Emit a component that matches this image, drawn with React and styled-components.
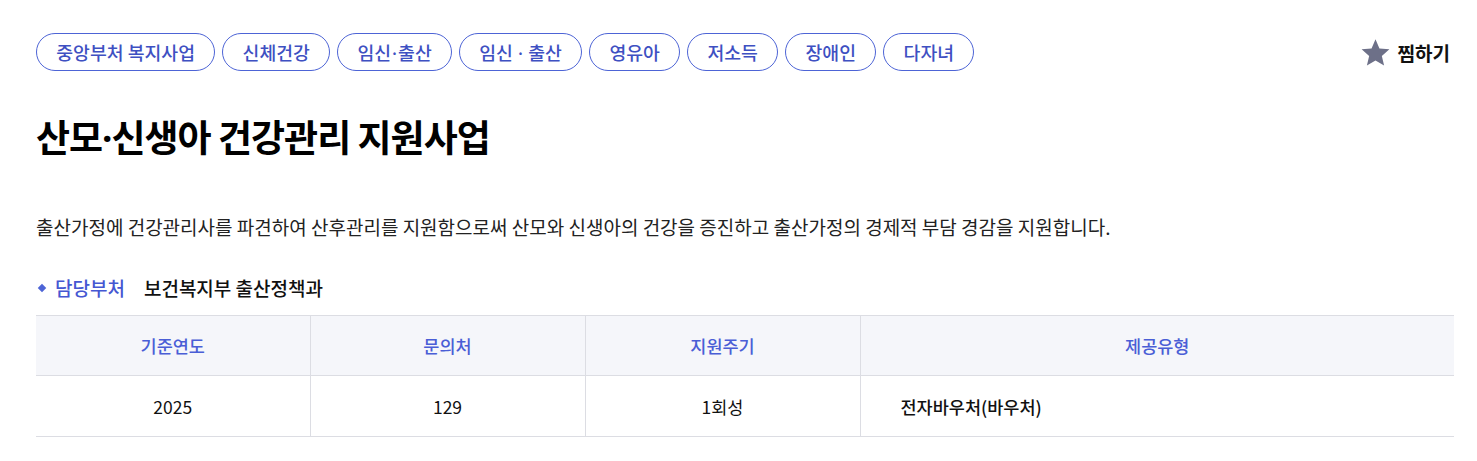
import React from "react";
import styled, { createGlobalStyle } from "styled-components";

const Global = createGlobalStyle`
  html, body { margin: 0; padding: 0; background: #fff; }
  body { font-family: "Noto Sans CJK KR", "Noto Sans", sans-serif; color: #111; }
`;

const Page = styled.div`
  padding: 33px 27px 0 36px;
`;

const TopRow = styled.div`
  display: flex;
  justify-content: space-between;
  align-items: center;
`;

const Chips = styled.div`
  display: flex;
  gap: 7px;
`;

const Chip = styled.span`
  display: inline-block;
  height: 38px;
  line-height: 36px;
  box-sizing: border-box;
  padding: 0 19.3px;
  border: 1px solid #4d64d6;
  border-radius: 19px;
  color: #3e50c2;
  font-size: 18.3px;
  font-weight: 500;
  white-space: pre;
`;

const Dot = styled.span`
  font-family: "Noto Sans", sans-serif;
  margin: 0 ${(p) => (p.$pad ? "1px" : "0")};
`;

const Fav = styled.button`
  display: flex;
  align-items: center;
  gap: 7px;
  border: 0;
  background: none;
  padding: 0;
  font-family: inherit;
  font-size: 19px;
  font-weight: 700;
  color: #111;
  cursor: pointer;
`;

const Title = styled.h1`
  margin: 37px 0 0;
  font-size: 37px;
  font-weight: 700;
  letter-spacing: -1px;
  line-height: 56px;
  color: #000;
`;

const Desc = styled.p`
  margin: 47px 0 0;
  font-size: 19px;
  line-height: 28px;
  color: #222;
`;

const Dept = styled.div`
  margin-top: 33px;
  display: flex;
  align-items: center;
  font-size: 19px;
  line-height: 28px;
`;

const Diamond = styled.span`
  width: 6px;
  height: 6px;
  background: #4d64d6;
  transform: rotate(45deg);
  margin: 0 10px 0 3px;
`;

const DeptLabel = styled.span`
  color: #4557d2;
  font-weight: 500;
  margin-right: 19px;
`;

const DeptValue = styled.span`
  color: #111;
  font-weight: 500;
`;

const Table = styled.table`
  margin-top: 13px;
  width: 1418px;
  border-collapse: collapse;
  table-layout: fixed;
  font-size: 17.5px;
  border-top: 1px solid #dcdde3;
  border-bottom: 1px solid #dcdde3;
`;

const Th = styled.th`
  height: 59px;
  padding: 0;
  background: #f5f6fa;
  color: #4a5ed6;
  font-weight: 500;
  text-align: center;
  border-left: 1px solid #dcdde3;
  border-bottom: 1px solid #dcdde3;
  &:first-child { border-left: 0; }
`;

const Td = styled.td`
  height: 60px;
  color: #111;
  text-align: ${(p) => (p.$left ? "left" : "center")};
  padding: ${(p) => (p.$left ? "0 0 0 40px" : "0")};
  border-left: 1px solid #dcdde3;
  font-weight: ${(p) => (p.$left ? 500 : 400)};
  &:first-child { border-left: 0; }
`;

const chips = [
  ["중앙부처 복지사업"],
  ["신체건강"],
  ["임신", "출산", ""],
  ["임신", "출산", " "],
  ["영유아"],
  ["저소득"],
  ["장애인"],
  ["다자녀"],
];

function Star() {
  return (
    <svg width="31" height="31" viewBox="0 0 24 24">
      <path
        d="M12 1.8l3.05 7.1 7.7.66-5.84 5.06 1.75 7.54L12 18.17l-6.66 3.99 1.75-7.54L1.25 9.56l7.7-.66z"
        fill="#6d7088"
      />
    </svg>
  );
}

export default function App() {
  return (
    <>
      <Global />
      <Page>
        <TopRow>
          <Chips>
            {chips.map((c, i) => (
              <Chip key={i}>
                {c.length === 1 ? (
                  c[0]
                ) : (
                  <>
                    {c[0] + c[2]}
                    <Dot $pad>·</Dot>
                    {c[2] + c[1]}
                  </>
                )}
              </Chip>
            ))}
          </Chips>
          <Fav>
            <Star />
            찜하기
          </Fav>
        </TopRow>
        <Title>
          산모<Dot>·</Dot>신생아 건강관리 지원사업
        </Title>
        <Desc>
          출산가정에 건강관리사를 파견하여 산후관리를 지원함으로써 산모와 신생아의 건강을 증진하고 출산가정의 경제적 부담 경감을 지원합니다.
        </Desc>
        <Dept>
          <Diamond />
          <DeptLabel>담당부처</DeptLabel>
          <DeptValue>보건복지부 출산정책과</DeptValue>
        </Dept>
        <Table>
          <colgroup>
            <col style={{ width: 274 }} />
            <col style={{ width: 275 }} />
            <col style={{ width: 275 }} />
            <col />
          </colgroup>
          <thead>
            <tr>
              <Th>기준연도</Th>
              <Th>문의처</Th>
              <Th>지원주기</Th>
              <Th>제공유형</Th>
            </tr>
          </thead>
          <tbody>
            <tr>
              <Td>2025</Td>
              <Td>129</Td>
              <Td>1회성</Td>
              <Td $left>전자바우처(바우처)</Td>
            </tr>
          </tbody>
        </Table>
      </Page>
    </>
  );
}
